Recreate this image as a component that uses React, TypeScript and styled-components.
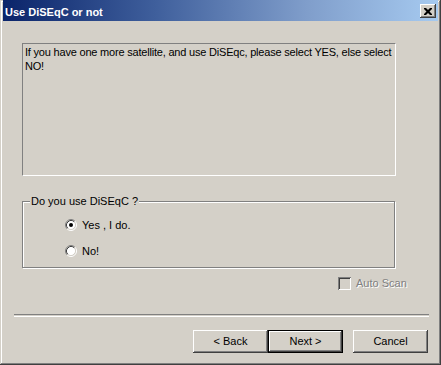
import React from "react";
import styled, { createGlobalStyle } from "styled-components";

const GlobalStyle = createGlobalStyle`
  html, body {
    margin: 0;
    padding: 0;
    background: #d4d0c8;
  }
  body {
    font-family: "Liberation Sans", Arial, sans-serif;
    font-size: 11px;
    color: #000;
  }
`;

const Window = styled.div`
  width: 441px;
  height: 365px;
  box-sizing: border-box;
  padding: 0 3px 3px 3px;
  background: #d4d0c8;
  display: flex;
  flex-direction: column;
  box-shadow: inset -1px -1px #404040, inset 1px 1px #d4d0c8,
    inset -2px -2px #808080, inset 2px 2px #ffffff;
`;

const TitleBar = styled.div`
  height: 21px;
  flex-shrink: 0;
  display: flex;
  align-items: flex-start;
  justify-content: space-between;
  padding: 0 2px 0 2px;
  background: linear-gradient(to right, #0a246a 0%, #3f5f9c 35%, #809ecb 70%, #a6caf0 100%);
`;

const TitleText = styled.span`
  padding-top: 3px;
  line-height: 18px;
  font-weight: bold;
  font-size: 11px;
  color: #ffffff;
  white-space: nowrap;
`;

const CloseButton = styled.div`
  margin-top: 4px;
  width: 16px;
  height: 14px;
  display: flex;
  align-items: center;
  justify-content: center;
  background: #d4d0c8;
  box-shadow: inset -1px -1px #404040, inset 1px 1px #ffffff,
    inset -2px -2px #808080, inset 2px 2px #d4d0c8;
`;

const MessageBox = styled.div`
  margin: 22px 0 0 19px;
  width: 374px;
  height: 133px;
  box-sizing: border-box;
  padding: 1px 1px 1px 2px;
  border-top: 1px solid #808080;
  border-left: 1px solid #808080;
  border-bottom: 1px solid #ffffff;
  border-right: 1px solid #ffffff;
  line-height: 14px;
  letter-spacing: -0.2px;
  white-space: nowrap;
`;

const GroupBox = styled.div`
  position: relative;
  margin: 25px 0 0 19px;
  width: 373px;
  height: 67px;
  box-sizing: border-box;
  padding: 16px 0 0 42px;
  border: 1px solid #808080;
  box-shadow: 1px 1px 0 #ffffff, inset 1px 1px 0 #ffffff;
  display: flex;
  flex-direction: column;
  gap: 12px;
`;

const GroupLabel = styled.span`
  position: absolute;
  top: -7px;
  left: 7px;
  padding: 0 1px;
  line-height: 13px;
  background: #d4d0c8;
`;

const OptionRow = styled.label`
  display: flex;
  align-items: center;
  gap: 5px;
  height: 14px;
  line-height: 14px;
`;

const CheckRow = styled.div`
  margin: 9px 0 0 335px;
  display: flex;
  align-items: center;
  gap: 5px;
  height: 13px;
`;

const CheckBox = styled.span`
  width: 13px;
  height: 13px;
  box-sizing: border-box;
  background: #d4d0c8;
  box-shadow: inset 1px 1px #808080, inset -1px -1px #ffffff,
    inset 2px 2px #404040, inset -2px -2px #d4d0c8;
`;

const DisabledText = styled.span`
  color: #808080;
  text-shadow: 1px 1px 0 #ffffff;
  line-height: 13px;
`;

const Separator = styled.div`
  margin: 24px 0 0 11px;
  width: 415px;
  height: 1px;
  border-top: 1px solid #808080;
  border-bottom: 1px solid #ffffff;
`;

const ButtonRow = styled.div`
  margin: 13px 10px 0 0;
  display: flex;
  justify-content: flex-end;
`;

const Button = styled.div<{ $default?: boolean; $gapLeft?: number }>`
  width: 75px;
  height: 23px;
  box-sizing: border-box;
  margin-left: ${(p) => p.$gapLeft ?? 0}px;
  display: flex;
  align-items: center;
  justify-content: center;
  background: #d4d0c8;
  border: ${(p) => (p.$default ? "1px solid #000000" : "none")};
  box-shadow: inset -1px -1px #404040, inset 1px 1px #ffffff,
    inset -2px -2px #808080, inset 2px 2px #d4d0c8;
  line-height: 13px;
`;

function Radio({ checked }: { checked?: boolean }) {
  return (
    <svg width="12" height="12" viewBox="0 0 12 12">
      <circle cx="6" cy="6" r="4.5" fill="#ffffff" />
      <path d="M2.11 9.89 A5.5 5.5 0 0 1 9.89 2.11" stroke="#808080" fill="none" />
      <path d="M9.89 2.11 A5.5 5.5 0 0 1 2.11 9.89" stroke="#ffffff" fill="none" />
      <path d="M2.82 9.18 A4.5 4.5 0 0 1 9.18 2.82" stroke="#404040" fill="none" />
      <path d="M9.18 2.82 A4.5 4.5 0 0 1 2.82 9.18" stroke="#d4d0c8" fill="none" />
      {checked && <circle cx="6" cy="6" r="2" fill="#000000" />}
    </svg>
  );
}

function CloseGlyph() {
  return (
    <svg width="8" height="7" viewBox="0 0 8 7">
      <path d="M0 0h2l2 2 2-2h2v1l-2.5 2.5L8 6v1H6L4 5 2 7H0V6l2.5-2.5L0 1z" fill="#000000" />
    </svg>
  );
}

export default function App() {
  return (
    <>
      <GlobalStyle />
      <Window>
        <TitleBar>
          <TitleText>Use DiSEqC or not</TitleText>
          <CloseButton>
            <CloseGlyph />
          </CloseButton>
        </TitleBar>

        <MessageBox>
          If you have one more satellite, and use DiSEqc, please select YES, else select
          <br />
          NO!
        </MessageBox>

        <GroupBox>
          <GroupLabel>Do you use DiSEqC ?</GroupLabel>
          <OptionRow>
            <Radio checked />
            <span>Yes , I do.</span>
          </OptionRow>
          <OptionRow>
            <Radio />
            <span>No!</span>
          </OptionRow>
        </GroupBox>

        <CheckRow>
          <CheckBox />
          <DisabledText>Auto Scan</DisabledText>
        </CheckRow>

        <Separator />

        <ButtonRow>
          <Button>&lt; Back</Button>
          <Button $default>Next &gt;</Button>
          <Button $gapLeft={10}>Cancel</Button>
        </ButtonRow>
      </Window>
    </>
  );
}
